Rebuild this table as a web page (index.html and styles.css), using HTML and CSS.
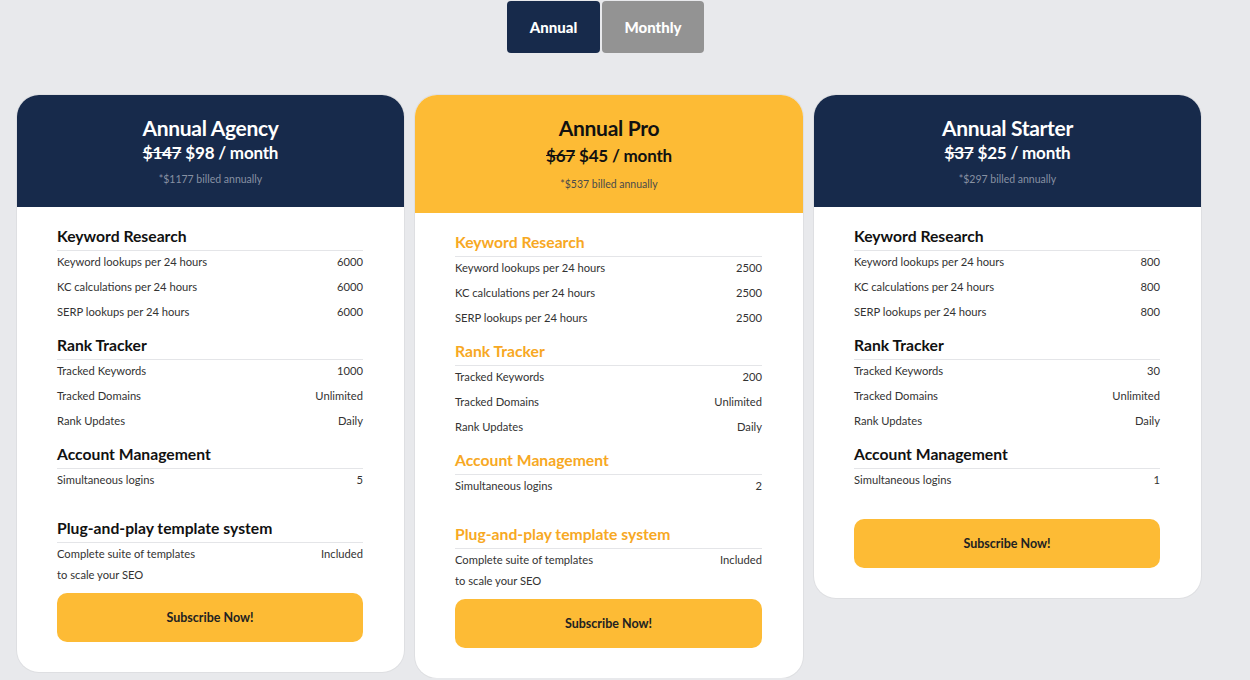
FILE: index.html
```html
<!DOCTYPE html>
<html>
<head>
<meta charset="utf-8">
<link rel="stylesheet" href="styles.css">
</head>
<body>
<div class="page">
  <div class="toggle">
    <button class="tbtn tbtn-active">Annual</button>
    <button class="tbtn tbtn-off">Monthly</button>
  </div>
  <div class="cards">
    <div class="card">
      <div class="head head-navy">
        <div class="title">Annual Agency</div>
        <div class="price"><s>$147</s> $98 / month</div>
        <div class="billed">*$1177 billed annually</div>
      </div>
      <div class="body">
        <div class="sec">
          <div class="sh">Keyword Research</div>
          <div class="row"><span>Keyword lookups per 24 hours</span><span>6000</span></div>
          <div class="row"><span>KC calculations per 24 hours</span><span>6000</span></div>
          <div class="row"><span>SERP lookups per 24 hours</span><span>6000</span></div>
        </div>
        <div class="sec">
          <div class="sh">Rank Tracker</div>
          <div class="row"><span>Tracked Keywords</span><span>1000</span></div>
          <div class="row"><span>Tracked Domains</span><span>Unlimited</span></div>
          <div class="row"><span>Rank Updates</span><span>Daily</span></div>
        </div>
        <div class="sec">
          <div class="sh">Account Management</div>
          <div class="row"><span>Simultaneous logins</span><span>5</span></div>
        </div>
        <div class="sec sec-plug">
          <div class="sh">Plug-and-play template system</div>
          <div class="row row-two"><span>Complete suite of templates<br>to scale your SEO</span><span>Included</span></div>
        </div>
        <button class="sub sub-near">Subscribe Now!</button>
      </div>
    </div>

    <div class="card card-pro">
      <div class="head head-yellow">
        <div class="title">Annual Pro</div>
        <div class="price"><s>$67</s> $45 / month</div>
        <div class="billed">*$537 billed annually</div>
      </div>
      <div class="body">
        <div class="sec">
          <div class="sh">Keyword Research</div>
          <div class="row"><span>Keyword lookups per 24 hours</span><span>2500</span></div>
          <div class="row"><span>KC calculations per 24 hours</span><span>2500</span></div>
          <div class="row"><span>SERP lookups per 24 hours</span><span>2500</span></div>
        </div>
        <div class="sec">
          <div class="sh">Rank Tracker</div>
          <div class="row"><span>Tracked Keywords</span><span>200</span></div>
          <div class="row"><span>Tracked Domains</span><span>Unlimited</span></div>
          <div class="row"><span>Rank Updates</span><span>Daily</span></div>
        </div>
        <div class="sec">
          <div class="sh">Account Management</div>
          <div class="row"><span>Simultaneous logins</span><span>2</span></div>
        </div>
        <div class="sec sec-plug">
          <div class="sh">Plug-and-play template system</div>
          <div class="row row-two"><span>Complete suite of templates<br>to scale your SEO</span><span>Included</span></div>
        </div>
        <button class="sub sub-near">Subscribe Now!</button>
      </div>
    </div>

    <div class="card">
      <div class="head head-navy">
        <div class="title">Annual Starter</div>
        <div class="price"><s>$37</s> $25 / month</div>
        <div class="billed">*$297 billed annually</div>
      </div>
      <div class="body">
        <div class="sec">
          <div class="sh">Keyword Research</div>
          <div class="row"><span>Keyword lookups per 24 hours</span><span>800</span></div>
          <div class="row"><span>KC calculations per 24 hours</span><span>800</span></div>
          <div class="row"><span>SERP lookups per 24 hours</span><span>800</span></div>
        </div>
        <div class="sec">
          <div class="sh">Rank Tracker</div>
          <div class="row"><span>Tracked Keywords</span><span>30</span></div>
          <div class="row"><span>Tracked Domains</span><span>Unlimited</span></div>
          <div class="row"><span>Rank Updates</span><span>Daily</span></div>
        </div>
        <div class="sec">
          <div class="sh">Account Management</div>
          <div class="row"><span>Simultaneous logins</span><span>1</span></div>
        </div>
        <button class="sub sub-far">Subscribe Now!</button>
      </div>
    </div>
  </div>
</div>
</body>
</html>
```

FILE: styles.css
```css
html, body {
  margin: 0;
  padding: 0;
  background: #e8e9ec;
  font-family: "Lato", "Source Sans Pro", "Noto Sans", sans-serif;
  color: #222;
}

.page {
  width: 1218px;
  padding-top: 1px;
}

.toggle {
  display: flex;
  justify-content: center;
  gap: 2px;
  padding-right: 7px;
  height: 52px;
}

.tbtn {
  border: none;
  height: 52px;
  border-radius: 4px;
  font-family: inherit;
  font-weight: 900;
  font-size: 15px;
  color: #fff;
  padding: 0;
}

.tbtn-active {
  width: 93px;
  background: #172a4b;
}

.tbtn-off {
  width: 102px;
  background: #939393;
}

.cards {
  display: flex;
  align-items: flex-start;
  gap: 11px;
  margin-top: 42px;
  padding-left: 17px;
}

.card {
  width: 387px;
  box-sizing: border-box;
  background: #fff;
  border-radius: 22px;
  overflow: hidden;
  box-shadow: 0 0 0 1px #dedfe2;
}

.card-pro {
  width: 388px;
}

.head {
  text-align: center;
  padding: 20px 10px 21px;
}

.head-navy {
  background: #172a4b;
  color: #fff;
}

.head-yellow {
  background: #fdbb35;
  color: #111;
  padding: 20px 10px 22px;
}

.title {
  font-size: 21px;
  font-weight: 700;
  line-height: 26px;
  letter-spacing: -0.3px;
}

.price {
  font-size: 17px;
  font-weight: 700;
  line-height: 22px;
  margin-top: 1px;
  letter-spacing: -0.2px;
}

.head-yellow .price {
  margin-top: 4px;
}

.billed {
  font-size: 10.5px;
  line-height: 14px;
  margin-top: 8px;
  color: #8791a3;
}

.head-yellow .billed {
  margin-top: 10px;
  color: #4a4a4a;
}

.body {
  padding: 19px 41px 30px 40px;
}

.sec + .sec {
  margin-top: 9px;
}

.sec.sec-plug {
  margin-top: 24px;
}

.sh {
  font-size: 15.7px;
  font-weight: 700;
  line-height: 20px;
  padding-bottom: 4px;
  border-bottom: 1px solid #e4e5e8;
  color: #111;
}

.card-pro .sh {
  color: #f7a823;
}

.row {
  display: flex;
  justify-content: space-between;
  font-size: 11.2px;
  line-height: 21px;
  padding-bottom: 4px;
  color: #333;
}

.row-two {
  line-height: 21px;
  padding: 0 0 4px;
}

.sub {
  display: block;
  width: 100%;
  height: 49px;
  border: none;
  border-radius: 10px;
  background: #fdbb35;
  font-family: inherit;
  font-size: 12.5px;
  font-weight: 700;
  color: #222;
  padding: 0;
}

.sub-near {
  margin-top: 4px;
}

.sub-far {
  margin-top: 25px;
}
```
